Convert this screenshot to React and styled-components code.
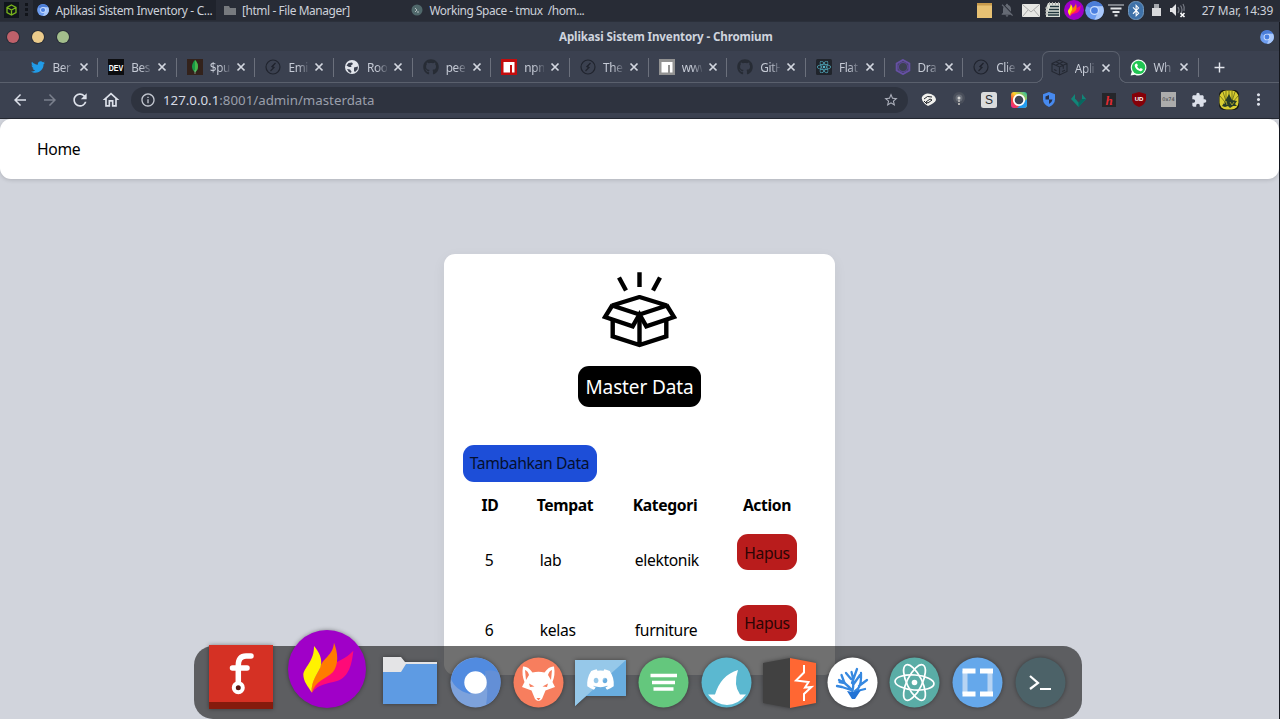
import React from 'react';
import styled, { createGlobalStyle } from 'styled-components';
import { FaTwitter, FaGithub, FaDiscord, FaReact, FaBluetoothB } from 'react-icons/fa';
import {
  MdArrowBack, MdArrowForward, MdRefresh, MdInfoOutline, MdStarBorder, MdExtension,
  MdMoreVert, MdNotificationsOff, MdAdd, MdOutlineHome,
} from 'react-icons/md';

const GlobalStyle = createGlobalStyle`
  * { box-sizing: border-box; }
  html { font-size: 15px; }
  body { margin: 0; font-family: 'Noto Sans', sans-serif; overflow: hidden; }
  svg { display: block; flex: none; }
`;

const Screen = styled.div`
  position: relative;
  display: flex;
  flex-direction: column;
  width: 1280px;
  height: 719px;
  overflow: hidden;
  background: #d1d4dc;
`;

/* ---------- desktop panel ---------- */
const Panel = styled.header`
  display: flex;
  align-items: center;
  height: 22px;
  flex: none;
  padding: 0 7px 1px 4px;
  background: #282c36;
  color: #cdd1da;
  font-size: 11.9px;
  white-space: pre;
  border-bottom: 1px solid #2b303b;
`;
const Launcher = styled.div`
  display: flex;
  align-items: center;
  justify-content: center;
  width: 15px;
  height: 16px;
  background: #10151c;
`;
const Grip = styled.div`
  width: 3px;
  height: 14px;
  margin: 0 5px 0 6px;
  background: repeating-linear-gradient(#11141a 0 3px, transparent 3px 5px);
`;
const Task = styled.div`
  display: flex;
  align-items: center;
  flex: none;
  gap: 6.5px;
  width: ${(p) => p.$width}px;
  height: 20px;
  padding-left: ${(p) => p.$pad || 4}px;
  background: ${(p) => (p.$active ? '#1f232c' : 'transparent')};
  letter-spacing: ${(p) => p.$spacing || -0.4}px;
`;
const Tray = styled.div`
  display: flex;
  align-items: center;
  flex: none;
  margin-left: auto;
`;
const TraySlot = styled.span`
  display: flex;
  align-items: center;
  justify-content: center;
  width: ${(p) => p.$width || 20.5}px;
  height: 20px;
`;
const Clock = styled.time`
  width: 72px;
  margin-left: 13px;
  text-align: right;
  letter-spacing: -0.2px;
`;

/* ---------- window chrome ---------- */
const TitleBar = styled.div`
  display: grid;
  grid-template-columns: 552px auto 1fr;
  align-items: center;
  height: 29px;
  flex: none;
  padding: 0 5px 0 7px;
  background: #363c49;
  border-right: 1px solid #15181f;
`;
const Lights = styled.div`
  display: flex;
  gap: 13px;
`;
const Light = styled.span`
  width: 12px;
  height: 12px;
  border-radius: 50%;
  background: ${(p) => p.$color};
  box-shadow: 0 0 0 1px rgba(25, 28, 36, 0.45);
`;
const WindowTitle = styled.h1`
  margin: 0;
  color: #cfd4de;
  font-size: 11.6px;
  letter-spacing: -0.13px;
  line-height: 16px;
  font-weight: 700;
`;
const TitleIcon = styled.span`
  justify-self: end;
`;
const TabStrip = styled.div`
  display: flex;
  height: 32px;
  flex: none;
  padding-left: 19.5px;
  background: #3b4150;
  border-right: 1px solid #15181f;
  box-shadow: inset 0 -1px #5a606d;
`;
const Tab = styled.div`
  display: flex;
  align-items: center;
  flex: none;
  width: 78.65px;
  height: 32px;
  padding-left: 10px;
  color: #c5cad5;
  font-size: 11.8px;
  letter-spacing: -0.35px;
  ${(p) => p.$active
    ? `
    position: relative;
    background: #3b4150;
    border: 1px solid #5a606d;
    border-bottom: 0;
    border-radius: 7px 7px 0 0;
    padding-left: 9px;
    &::before, &::after {
      content: '';
      position: absolute;
      bottom: 0;
      width: 8px;
      height: 8px;
    }
    &::before {
      left: -8px;
      background: radial-gradient(circle at 0 0, #3b4150 6.8px, #5a606d 7.2px 7.8px, #3b4150 8.2px);
    }
    &::after {
      right: -8px;
      background: radial-gradient(circle at 100% 0, #3b4150 6.8px, #5a606d 7.2px 7.8px, #3b4150 8.2px);
    }
  `
    : ''}
`;
const Favicon = styled.span`
  display: flex;
  justify-content: center;
  flex: none;
  width: 16px;
`;
const TabLabel = styled.span`
  flex: none;
  width: 20px;
  margin: 0 5px 0 7px;
  overflow: hidden;
  white-space: nowrap;
  -webkit-mask-image: linear-gradient(90deg, #000 50%, rgba(0, 0, 0, 0.15));
  mask-image: linear-gradient(90deg, #000 50%, rgba(0, 0, 0, 0.15));
`;
const Divider = styled.i`
  width: 1px;
  height: 19px;
  margin-left: auto;
  background: ${(p) => (p.$hidden ? 'transparent' : '#6b707c')};
`;
const NewTab = styled.div`
  display: flex;
  align-items: center;
  padding-left: 12px;
  color: #e4e7ed;
`;
const Toolbar = styled.div`
  display: flex;
  align-items: center;
  height: 36px;
  flex: none;
  padding: 0 5px 1.5px 11px;
  background: #3b4150;
  color: #dde1ea;
  border-right: 1px solid #15181f;
  border-bottom: 1px solid #252932;
`;
const NavButton = styled.span`
  display: flex;
  justify-content: center;
  flex: none;
  width: 30.2px;
  margin-left: ${(p) => (p.$first ? -6 : 0)}px;
  color: ${(p) => (p.$dim ? '#7b808d' : '#dde1ea')};
`;
const AddressBar = styled.div`
  display: flex;
  align-items: center;
  flex: none;
  width: 777px;
  height: 26px;
  margin-left: 5.2px;
  padding: 0 8.5px 0 9px;
  border-radius: 13px;
  background: #2e333f;
  color: #9a9fab;
  font-size: 13.3px;
`;
const Url = styled.span`
  flex: 1;
  margin-left: 7px;
  b { color: #d6dae3; font-weight: 400; }
`;
const Extensions = styled.div`
  display: flex;
  align-items: center;
  flex: none;
  margin-left: 6px;
`;
const Extension = styled.span`
  display: flex;
  align-items: center;
  justify-content: center;
  width: 30px;
  height: 26px;
`;

/* ---------- page ---------- */
const Page = styled.main`
  flex: 1;
  min-height: 0;
  display: flex;
  flex-direction: column;
  align-items: center;
  background: #d1d4dc;
  border-right: 1px solid #15181f;
  color: #000;
  font-size: 15.7px;
  letter-spacing: -0.37px;
`;
const Navbar = styled.nav`
  display: flex;
  align-items: center;
  width: 100%;
  height: 60px;
  flex: none;
  padding: 0.5px 0 0 37px;
  background: #fff;
  border-radius: 11px;
  box-shadow: 0 1px 4px rgba(0, 0, 0, 0.16);
`;
const Card = styled.section`
  display: flex;
  flex-direction: column;
  align-items: center;
  width: 391px;
  height: 421px;
  flex: none;
  margin-top: 75px;
  padding: 18px 18.5px;
  background: #fff;
  border-radius: 11px;
  box-shadow: 0 4px 14px rgba(0, 0, 0, 0.06);
`;
const Heading = styled.h2`
  flex: none;
  margin: 18px 0 38px;
  width: 123px;
  height: 41px;
  border-radius: 11px;
  background: #000;
  color: #fff;
  font-size: 19px;
  letter-spacing: -0.13px;
  font-weight: 400;
  line-height: 42px;
  text-align: center;
`;
const Button = styled.button`
  flex: none;
  display: block;
  width: ${(p) => p.$width}px;
  height: ${(p) => p.$height}px;
  padding: ${(p) => p.$drop || 0}px 0 0;
  border: 0;
  border-radius: 11px;
  background: ${(p) => p.$color};
  color: ${(p) => p.$ink};
  font: inherit;
  letter-spacing: inherit;
  text-align: center;
  white-space: nowrap;
`;
const AddButton = styled(Button)`
  align-self: flex-start;
  padding-bottom: 1.5px;
`;
const Row = styled.div`
  display: grid;
  grid-template-columns: 54px 96px 104px 100px;
  align-self: stretch;
  height: ${(p) => (p.$head ? 45 : 70.3)}px;
  flex: none;
  padding-top: ${(p) => (p.$head ? 0 : 7.3)}px;
  align-items: start;
`;
const HeadCell = styled.strong`
  padding-left: 1px;
  line-height: 47px;
  text-align: center;
`;
const Cell = styled.span`
  padding-left: ${(p) => p.$indent}px;
  line-height: 36px;
  margin-top: 7.9px;
`;
const ActionCell = styled.span`
  padding-left: 20.5px;
`;

/* ---------- dock ---------- */
const Dock = styled.div`
  position: absolute;
  left: 194px;
  bottom: 0;
  display: flex;
  align-items: center;
  width: 888px;
  height: 73px;
  padding-left: 15px;
  border-radius: 19px;
  background: rgba(8, 8, 8, 0.58);
`;
const DockSlot = styled.span`
  display: flex;
  justify-content: center;
  flex: none;
  width: ${(p) => p.$width || 62.8}px;
  margin: 0 ${(p) => p.$after || 0}px ${(p) => p.$raise || 0}px 0;
  filter: drop-shadow(0 0 2px rgba(0, 0, 0, 0.4));
`;

const CloseIcon = () => (
  <svg width="12" height="12" viewBox="0 0 12 12" fill="none" stroke="#d3d7e0" strokeWidth="1.700"><path d="m2.500 2.500 7 7m0-7-7 7" /></svg>
);

function ChromiumLogo({ size }) {
  return (
    <svg width={size} height={size} viewBox="0 0 20 20">
      <circle cx="10" cy="10" r="9.800" fill="#6d9df0" />
      <path d="M10 10 1.500 5A10 10 0 0 1 18.800 5.500H10z" fill="#4b7dd8" />
      <path d="M14 11 10 19.800A9.800 9.800 0 0 0 18.800 5.500H11z" fill="#a9c8fb" />
      <circle cx="10" cy="10" r="4.800" fill="#c8dcfd" />
      <circle cx="10" cy="10" r="3.500" fill="#4a7fe0" />
    </svg>
  );
}

function Flame({ size }) {
  return (
    <svg width={size} height={size} viewBox="0 0 78 78">
      <circle cx="39" cy="39" r="39" fill="#a000c8" />
      <path d="M65.300 20.700C64 34 61 47 49 51C39 54 30 54 24 62.700C24 50 31 43 40 37C49 31 58 29 65.300 20.700z" fill="#ff0a78" />
      <path d="M46 12.700C50 23 51 34 45 42C38 49 27 51 24 62.700C22 50 30 44 32 38C34 28 45 26 46 12.700z" fill="#ff7c00" />
      <path d="M26 16C31 22 35 29 32.500 37C29 45 23 51 23.700 62.700C20 56 15.300 52 15.300 44C18 35 26 31 26 16z" fill="#fff200" />
    </svg>
  );
}

const Compass = () => (
  <svg width="16" height="16" viewBox="0 0 16 16" fill="none" stroke="#20242e" strokeWidth="1.200">
    <circle cx="8" cy="8" r="7" />
    <path d="M10.500 4 7 7.500 9 8.500 5.500 12" />
    <path d="M10.500 4 6.500 7.500 7.300 8.800z" fill="#20242e" stroke="none" />
  </svg>
);

const NpmMark = ({ color }) => (
  <svg width="16" height="16" viewBox="0 0 16 16">
    <path d="M0 0h16v16H0z" fill={color} />
    <path d="M2.500 3h11v10.500h-2.500V6H9v7.500H2.500z" fill="#fff" />
  </svg>
);

const DevMark = () => (
  <svg width="16" height="16" viewBox="0 0 16 16">
    <path d="M0 0h16v16H0z" fill="#0c0d10" />
    <text x="8" y="11.600" fill="#fff" fontSize="9.500" fontWeight="700" letterSpacing="0" textAnchor="middle" textLength="14.500" lengthAdjust="spacingAndGlyphs" fontFamily="Liberation Sans, sans-serif">DEV</text>
  </svg>
);

const Leaf = () => (
  <svg width="16" height="16" viewBox="0 0 16 16">
    <path d="M0 0h16v16H0z" fill="#33221b" />
    <path d="M8 1C12 5 12 10 8 13.500C4 10 4 5 8 1z" fill="#169b45" />
    <path d="M8 1C12 5 12 10 8 13.500z" fill="#47b64b" />
    <path d="M8 11v4" stroke="#9fb79b" strokeWidth=".7" />
  </svg>
);

const Globe = () => (
  <svg width="16" height="16" viewBox="0 0 16 16">
    <circle cx="8" cy="8" r="7" fill="#e3e6ec" />
    <path d="M2.500 6.500 4.500 4l3.500-.5 1 1.500-2 1.500.5 1.500H5zM10 8.500l4-1-.5 3-2.500 2.500-1-1zM3 10l3 .5 1.500 2-.5 1.500Q4 13 3 10z" fill="#3b4150" />
  </svg>
);

const ReactMark = () => (
  <svg width="16" height="16" viewBox="0 0 16 16">
    <rect width="16" height="16" rx="1.500" fill="#20242b" />
    <FaReact x="1" y="1" width="14" height="14" size={14} color="#55b4c8" />
  </svg>
);

const Hexagon = () => (
  <svg width="16" height="16" viewBox="0 0 16 16" fill="none">
    <path d="M8 1 14.300 4.500v7L8 15 1.700 11.500v-7z" stroke="#6650a4" strokeWidth="2" />
    <circle cx="8" cy="8" r="4.600" stroke="#59478f" strokeWidth="1.200" />
  </svg>
);

const Parcel = () => (
  <svg width="17" height="17" viewBox="0 0 17 17" fill="none" stroke="#242832" strokeWidth="1.100">
    <path d="M1 4.500 8.500 1 16 4.500v8L8.500 16 1 12.500zM1 4.500 8.500 8 16 4.500M8.500 8v8M4.800 2.800l7.500 3.500v3.500M12.200 2.800 4.800 6.300M3 10.500l2.500 1.200M11 12.500l3-1.300" />
  </svg>
);

const WhatsApp = () => (
  <svg width="17" height="17" viewBox="0 0 17 17">
    <path d="M8.500.5a8 8 0 1 1-3.600 15.200L.6 16.500l1.200-4A8 8 0 0 1 8.500.5z" fill="#f4fff7" />
    <circle cx="8.600" cy="8.400" r="6.700" fill="#20c552" />
    <path d="M5.800 4.700 7 4.600l.9 2-.8 1c.6 1.200 1.400 1.900 2.700 2.500l.9-1 2 1c0 1.500-1.100 2.200-2.300 2.100C7.300 11.700 4.800 8.700 4.700 6.600c0-.8.4-1.500 1.100-1.900z" fill="#fff" />
  </svg>
);

const TABS = [
  ['Ber', <FaTwitter size={14} color="#219ce8" />],
  ['Bes', <DevMark />],
  ['$pu', <Leaf />],
  ['Emi', <Compass />],
  ['Roo', <Globe />],
  ['pee', <FaGithub size={16} color="#272c35" />],
  ['npm', <NpmMark color="#c40c0d" />],
  ['The', <Compass />],
  ['www', <NpmMark color="#929292" />],
  ['GitH', <FaGithub size={16} color="#272c35" />],
  ['Flat', <ReactMark />],
  ['Dra', <Hexagon />],
  ['Clie', <Compass />],
  ['Apli', <Parcel />, true],
  ['Wh', <WhatsApp />],
];

const EXTENSIONS = [
  <svg width="16" height="14" viewBox="0 0 16 14"><path d="M1 4Q4-1 10 1q5 2 5 6-1 3-8 6l-3-2Q0 8 1 4z" fill="#f1f1ee" /><path d="M3 6q3-4 8-2M5 9l4-3 2 1-4 3zM3 8l3 3" stroke="#22252b" fill="none" /></svg>,
  <svg width="16" height="16" viewBox="0 0 16 16"><circle cx="8" cy="6" r="6" fill="#4a4f5b" /><circle cx="8" cy="6" r="3.500" fill="#696e78" /><circle cx="8" cy="6" r="1.500" fill="#d5d5d5" /><path d="M8 8v6" stroke="#aaa" strokeWidth="2" strokeDasharray="2 1" /></svg>,
  <svg width="16" height="16" viewBox="0 0 16 16"><rect width="16" height="16" rx="2.500" fill="#dadbdc" /><text x="8" y="12.300" fill="#282b30" fontSize="12" textAnchor="middle" fontFamily="Liberation Sans, sans-serif">S</text></svg>,
  <svg width="16" height="16" viewBox="0 0 16 16"><defs><linearGradient id="rim" x1="0" y1="1" x2="1" y2="0"><stop stopColor="#f020a0" /><stop offset=".3" stopColor="#f34a39" /><stop offset=".55" stopColor="#ffd02b" /><stop offset="1" stopColor="#17bda8" /></linearGradient></defs><rect width="16" height="16" rx="3" fill="url(#rim)" /><path d="M16 7v6a3 3 0 0 1-3 3H6z" fill="#239cf0" /><circle cx="8" cy="8" r="5.200" fill="#3c4352" stroke="#fff" strokeWidth="1.800" /></svg>,
  <svg width="14" height="15" viewBox="0 0 14 15"><path d="M7 0 13 2.200v5Q13 12 7 15 1 12 1 7.200v-5z" fill="#478af0" /><path d="M7 3v4.500H3.500V4.500zM7 7.500h3.500Q10 10.500 7 12z" fill="#293248" /></svg>,
  <svg width="15" height="14" viewBox="0 0 15 14"><path d="M4 1v5h7V1l4 5-7.500 8L0 6z" fill="#128578" /><path d="M7.500 6H15l-7.500 8z" fill="#07675f" /><path d="M4.500 6h6l-3 3.500z" fill="#3b4150" /></svg>,
  <svg width="14" height="14" viewBox="0 0 14 14"><path d="M0 0h14v14H0z" fill="#25262a" /><text x="7" y="12" textAnchor="middle" fill="#e22a31" fontSize="13" fontStyle="italic" fontWeight="700" fontFamily="Liberation Serif, serif">h</text></svg>,
  <svg width="14" height="15" viewBox="0 0 14 15"><path d="M7 0 14 2v5q0 5-7 8Q0 12 0 7V2z" fill="#850008" /><text x="7" y="8.700" fill="#fff" fontSize="6" textAnchor="middle" fontWeight="700" fontFamily="Liberation Sans, sans-serif">UD</text></svg>,
  <svg width="15" height="15" viewBox="0 0 15 15"><path d="M0 0h15v15H0z" fill="#acacac" /><text x="7.500" y="9.300" fill="#33353a" fontSize="5" textAnchor="middle" fontFamily="DejaVu Sans, sans-serif">0x74</text></svg>,
  <MdExtension size={16} color="#dce0ea" />,
  <svg width="20" height="20" viewBox="0 0 20 20"><rect width="20" height="20" rx="5" fill="#171a13" /><rect x=".5" y=".5" width="19" height="19" rx="7" fill="#d8cd31" /><path d="M10 1v9M7 1v9M13 1v9M4 2l3 9M16 2l-3 9M1 6l5 6M19 6l-5 6" stroke="#686915" strokeWidth=".8" /><path d="m10 4 3 6 5 1-2 3 2 2h-4l-3 2-2-2-3 1-3-1 2-3z" fill="#273c29" /><path d="m5 14 2-3 1 4M11 12l2 3 2-3" stroke="#b7b22b" strokeWidth=".8" fill="none" /></svg>,
  <MdMoreVert size={19} />,
];

const TRAY = [
  [20, <svg width="15" height="15" viewBox="0 0 15 15"><path d="M0 0h15v15H0z" fill="#e7c173" /><path d="M0 0h15v2.500H0z" fill="#c79a4d" /></svg>],
  [25, <MdNotificationsOff size={16} color="#656a74" />],
  [24, <svg width="18" height="13" viewBox="0 0 18 13"><rect width="18" height="13" rx="1" fill="#e7e7e4" /><path d="m1 1 8 7 8-7M1 12l5-6M17 12l-5-6" stroke="#aaa" fill="none" /></svg>],
  [20, <svg width="16" height="16" viewBox="0 0 16 16"><path d="M3 1h12v14H1V6z" fill="#dadfd8" /><path d="M5 4.500h9M4 7.500h10M3 10.500h11M3 13h11" stroke="#20363d" strokeWidth="1.400" /><path d="M0 6h3M0 9h3M0 12h3M4.500 0v3M7.500 0v3M10.500 0v3M13.500 0v3" stroke="#aaa" /></svg>],
  [21, <Flame size={20} />],
  [21, <ChromiumLogo size={19} />],
  [21, <svg width="16" height="13" viewBox="0 0 16 13" fill="none" stroke="#e1e3e7" strokeWidth="2"><path d="M0 1h16" stroke="#7c8088" /><path d="M2.500 4.500h11M4.500 8h7M6.500 11.500h3" /></svg>],
  [20, <svg width="16" height="19" viewBox="0 0 16 19"><rect x=".5" y=".5" width="15" height="18" rx="7" fill="#3f72a9" stroke="#7197bd" /><FaBluetoothB x="1.500" y="3" size={13} color="#fff" /></svg>],
  [21, <svg width="9" height="12" viewBox="0 0 9 12"><path d="M2 0h5v4h2v8H0V4h2z" fill="#d8d9dc" /><path d="M2 0h5v4H2z" fill="#a4a7ad" /></svg>],
  [21, <svg width="17" height="15" viewBox="0 0 17 15" fill="none"><path d="M1 5h2l4-4v12L3 9H1z" fill="#e3e4e7" /><path d="M9 4q2 3 0 6M11.500 2.500q3 4 0 9M14 1q2 3 1 7" stroke="#777b85" strokeWidth="1.200" /><path d="m11.500 10 4 4m0-4-4 4" stroke="#fff" strokeWidth="1.600" /></svg>],
];

const Disc = ({ color, children }) => (
  <svg width="51" height="51" viewBox="0 0 51 51" fill="none">
    <circle cx="25.500" cy="25.500" r="25" fill={color} />
    {children}
  </svg>
);

const DOCK = [
  <svg width="54" height="47" viewBox="0 0 54 47"><path d="M0 0h18l4 5h32v15H0z" fill="#e4e4e6" /><path d="M0 15h18l5-8h31v40H0z" fill="#5e9be3" /></svg>,
  <Disc color="#7da2dc">
    <path d="M1 22A25 25 0 0 1 50 20L36 17 20 37C9 34 4 29 1 22z" fill="#518be0" />
    <path d="M35 14q9-2 14 2a25 25 0 0 1-13 32q3-16-1-34z" fill="#638fd6" />
    <circle cx="25.500" cy="25.500" r="11.200" fill="#fff" />
  </Disc>,
  <Disc color="#f77e5e">
    <path d="M10 9.500Q15 9 19.500 15.500Q25.500 14 31.500 15.500Q36 9 41 9.500Q42.500 18 39.500 25L42 30 32.500 33.500 29 42Q25.500 46 22 42L18.500 33.500 9 30 11.500 25Q8.500 18 10 9.500z" fill="#fff" />
    <path d="M12 13q3 1 4 5l-3 5zM39 13q-3 1-4 5l3 5zM16 26.500l5.500 3-4.500.5zM35 26.500l-5.500 3 4.500.5zM23.500 41h4L25.500 43.500z" fill="#f77e5e" />
  </Disc>,
  <svg width="51" height="47" viewBox="0 0 51 47"><path d="M0 1h51v36H11L0 47z" fill="#69addf" /><path d="M0 1h51L0 47z" fill="#96c8e9" /><FaDiscord x="11" y="6" size={29} color="#fff" /></svg>,
  <Disc color="#64c77d"><path d="M12.500 18.500h26.500M14 25.500h23M15.500 32h20" stroke="#fff" strokeWidth="3.600" /></Disc>,
  <Disc color="#5bb8d0"><path d="M7 37.500h7Q20 18 37 13q-5 15 2 24.500h6Q37 48 26 48T7 37.500z" fill="#fff" /></Disc>,
  <svg width="53" height="50" viewBox="0 0 53 50"><path d="M0 5 27 0v50L0 45z" fill="#414141" /><path d="M27 0l26 5v40l-26 5z" fill="#ff6733" /><path d="M41 7v7.500L33 22.500l12.500 1.500-3.500 5.500 6.500-.5L41 36v7" stroke="#fff" strokeWidth="2" fill="none" /></svg>,
  <Disc color="#fff">
    <path d="M25.500 40V34q-4-5-8-8l-5-1M17.500 26l-3-8M18 26l-6-3M15 30l-5-1M24 33 15 30M25.500 34q2-9-1-19M24 22l-5-6M25 26l5-14M26 28l7-10M28 34q6-3 6-13M32 29l8-6M30 34l8-2M34 21v-5" stroke="#3688e0" strokeWidth="2.300" strokeLinecap="round" />
    <path d="m20 34 5 8h3l6-9-8 2z" fill="#2273d5" />
  </Disc>,
  <Disc color="#5aada6">
    <g stroke="#fff" strokeWidth="1.700"><ellipse cx="25.500" cy="25.500" rx="19.500" ry="7.500" transform="rotate(4 25.500 25.500)" /><ellipse cx="25.500" cy="25.500" rx="19.500" ry="7.500" transform="rotate(64 25.500 25.500)" /><ellipse cx="25.500" cy="25.500" rx="19.500" ry="7.500" transform="rotate(116 25.500 25.500)" /></g>
    <circle cx="25.500" cy="25.500" r="2.800" fill="#fff" />
  </Disc>,
  <Disc color="#65a8eb"><path d="M13 14v23M38 14v23" stroke="#b7d4f3" strokeWidth="5" /><path d="M10.500 14h13M28 14h13M10.500 37h13M28 37h13" stroke="#fff" strokeWidth="5" /></Disc>,
  <Disc color="#4c6268"><path d="m15 19 8 7-8 6M25 32h11" stroke="#fff" strokeWidth="2.200" /></Disc>,
];

const RECORDS = [
  { id: 5, place: 'lab', category: 'elektonik' },
  { id: 6, place: 'kelas', category: 'furniture' },
];

export default function App() {
  return (
    <Screen>
      <GlobalStyle />
      <Panel>
        <Launcher>
          <svg width="11" height="12" viewBox="0 0 11 12" fill="none" stroke="#79b51c" strokeWidth="1.300"><path d="M5.500 1 10 3.500v5L5.500 11 1 8.500v-5zM1 3.500 5.500 6 10 3.500M5.500 6v5" /></svg>
        </Launcher>
        <Grip />
        <Task $active $width={183} $spacing={-0.33}><ChromiumLogo size={12} />Aplikasi Sistem Inventory - C...</Task>
        <Task $width={187} $pad={7.5}>
          <svg width="12" height="10" viewBox="0 0 12 10"><path d="M0 1h5l1 2h6v7H0z" fill="#777a7e" /></svg>
          [html - File Manager]
        </Task>
        <Task $width={190} $pad={8} $spacing={-0.45}>
          <svg width="12" height="12" viewBox="0 0 12 12"><circle cx="6" cy="6" r="5.500" fill="#50686b" /><path d="m4 4 2 2-2 2M6 8h2" stroke="#b2bdbf" fill="none" /></svg>
          {'Working Space - tmux  /hom...'}
        </Task>
        <Tray>
          {TRAY.map(([width, icon], i) => <TraySlot key={i} $width={width}>{icon}</TraySlot>)}
          <Clock>27 Mar, 14:39</Clock>
        </Tray>
      </Panel>

      <TitleBar>
        <Lights><Light $color="#bf616a" /><Light $color="#ebcb8b" /><Light $color="#a3be8c" /></Lights>
        <WindowTitle>Aplikasi Sistem Inventory - Chromium</WindowTitle>
        <TitleIcon><ChromiumLogo size={14} /></TitleIcon>
      </TitleBar>

      <TabStrip>
        {TABS.map(([label, icon, active], i) => (
          <Tab key={i} $active={active}>
            <Favicon>{icon}</Favicon>
            <TabLabel>{label}</TabLabel>
            <CloseIcon />
            <Divider $hidden={active || i === 12} />
          </Tab>
        ))}
        <NewTab><MdAdd size={17} /></NewTab>
      </TabStrip>

      <Toolbar>
        <NavButton $first><MdArrowBack size={18} /></NavButton>
        <NavButton $dim><MdArrowForward size={18} /></NavButton>
        <NavButton><MdRefresh size={20} /></NavButton>
        <NavButton><MdOutlineHome size={20} /></NavButton>
        <AddressBar>
          <MdInfoOutline size={16} color="#c3c7d0" />
          <Url><b>127.0.0.1</b>:8001/admin/masterdata</Url>
          <MdStarBorder size={16} color="#adb1bc" />
        </AddressBar>
        <Extensions>{EXTENSIONS.map((icon, i) => <Extension key={i}>{icon}</Extension>)}</Extensions>
      </Toolbar>

      <Page>
        <Navbar>Home</Navbar>
        <Card>
          <svg width="75" height="76" viewBox="0 0 75 76" fill="none" stroke="#000" strokeWidth="4.400">
            <path d="M37.500 .3V15M17 5.500l7 13M58 5.500l-7 13" />
            <path d="M37.500 25 65 33.500 37.500 42.500 10 33.500z" strokeLinejoin="bevel" />
            <path d="M10.500 33 3 45l27.700 9.300 6.800-11.800 6.800 11.800L72 45l-7.500-12" />
            <path d="M10.700 48v16.300l26.800 8.700 26.800-8.700V48M37.500 42v31" />
          </svg>
          <Heading>Master Data</Heading>
          <AddButton $width={134} $height={37} $color="#1d4ed8" $ink="#05102e">Tambahkan Data</AddButton>
          <Row $head>
            <HeadCell>ID</HeadCell><HeadCell>Tempat</HeadCell><HeadCell>Kategori</HeadCell><HeadCell>Action</HeadCell>
          </Row>
          {RECORDS.map((r) => (
            <Row key={r.id}>
              <Cell $indent={22.3}>{r.id}</Cell>
              <Cell $indent={23.3}>{r.place}</Cell>
              <Cell $indent={22.3}>{r.category}</Cell>
              <ActionCell><Button $width={60} $height={36} $drop={0.5} $color="#b91c1c" $ink="#2b0505">Hapus</Button></ActionCell>
            </Row>
          ))}
        </Card>
      </Page>

      <Dock>
        <DockSlot $width={64} $after={15} $raise={12}>
          <svg width="64" height="64" viewBox="0 0 64 64" fill="none">
            <path d="M0 0h64v64H0z" fill="#d53124" /><path d="M0 57h64v7H0z" fill="#851b0d" />
            <path d="M29.300 38V20Q29.300 11 37 11h5M23.500 23h14.500" stroke="#fff" strokeWidth="5.500" strokeLinecap="round" />
            <circle cx="29.300" cy="42.700" r="4.500" fill="#5b1713" stroke="#fff" strokeWidth="4" />
          </svg>
        </DockSlot>
        <DockSlot $width={78} $after={12.6} $raise={27}><Flame size={78} /></DockSlot>
        {DOCK.map((icon, i) => <DockSlot key={i} $raise={i === 0 ? 4 : 0} $after={i === 0 ? 2.6 : 0}>{icon}</DockSlot>)}
      </Dock>
    </Screen>
  );
}
